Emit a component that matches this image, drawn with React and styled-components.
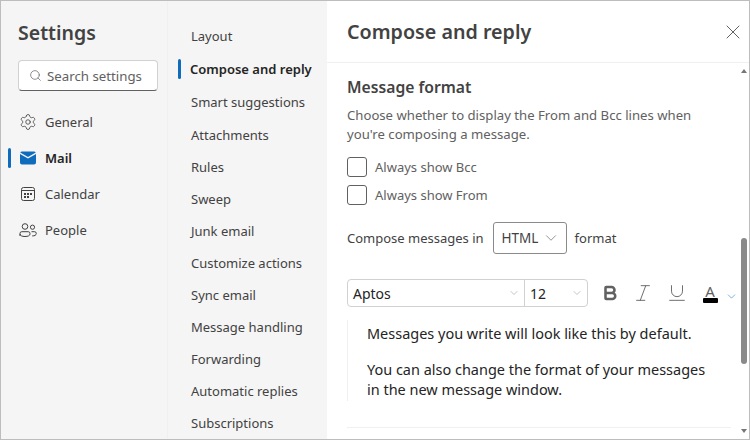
import React from "react";
import styled, { createGlobalStyle } from "styled-components";
import { Settings as GearIcon, Search, X, ChevronDown, Bold, Italic, Underline } from "lucide-react";

const GlobalStyle = createGlobalStyle`
  html, body { margin: 0; padding: 0; background: #fff; }
  * { box-sizing: border-box; }
  body { font-family: "Noto Sans", "Open Sans", sans-serif; color: #424242; }
`;

const MailIcon = () => (
  <svg width="16" height="14" viewBox="0 0 16 14">
    <path d="M0 3 L8 7.6 L16 3 V11.5 A2 2 0 0 1 14 13.5 H2 A2 2 0 0 1 0 11.5 Z" fill="#0f6cbd" />
    <path d="M0.2 1.6 A2 2 0 0 1 2 0.5 H14 A2 2 0 0 1 15.8 1.6 L8 6 Z" fill="#0f6cbd" />
  </svg>
);

const CalendarIcon = () => (
  <svg width="16" height="16" viewBox="0 0 16 16" fill="none" stroke="#424242">
    <rect x="1.5" y="1.5" width="13" height="13" rx="2" />
    <path d="M1.5 4.5 H14.5" />
    <g fill="#424242" stroke="none">
      <rect x="4" y="7" width="2" height="2" />
      <rect x="7" y="7" width="2" height="2" />
      <rect x="10" y="7" width="2" height="2" />
      <rect x="4" y="10" width="2" height="2" />
      <rect x="7" y="10" width="2" height="2" />
    </g>
  </svg>
);

const PeopleIcon = () => (
  <svg width="18" height="14" viewBox="0 0 18 14" fill="none" stroke="#424242">
    <circle cx="6" cy="3.5" r="2.8" />
    <path d="M1 13 V10.5 A1.8 1.8 0 0 1 2.8 8.7 H9.2 A1.8 1.8 0 0 1 11 10.5 V11 C11 12.6 9 13.5 6 13.5 C3 13.5 1 12.6 1 11" />
    <circle cx="13.5" cy="4.2" r="2.1" />
    <path d="M12.5 8.7 H15.5 A1.8 1.8 0 0 1 17.3 10.5 C17.3 12.2 15.6 13 13.2 12.9" />
  </svg>
);

const Window = styled.div`
  width: 750px;
  height: 440px;
  display: flex;
  overflow: hidden;
  border: 1px solid #bdbdbd;
`;

const Sidebar = styled.aside`
  width: 166px;
  flex: none;
  background: #f5f5f5;
  padding: 18px 9px 0 7px;
`;

const Title = styled.h1`
  margin: 0 0 0 10px;
  font-size: 19.5px;
  line-height: 28px;
  font-weight: 600;
  color: #424242;
`;

const SearchBox = styled.div`
  margin: 13px 0 13px 10px;
  height: 31px;
  display: flex;
  align-items: center;
  gap: 5px;
  padding-left: 10px;
  background: #fff;
  border: 1px solid #d1d1d1;
  border-bottom-color: #616161;
  border-radius: 4px;
  font-size: 13.25px;
  color: #616161;
`;

const NavRow = styled.div`
  height: 36px;
  display: flex;
  align-items: center;
  font-size: 13px;
  font-weight: ${(p) => (p.$active ? 600 : 400)};
  color: ${(p) => (p.$active ? "#242424" : "#424242")};
  &::before {
    content: "";
    width: 3px;
    height: 20px;
    flex: none;
    border-radius: 2px;
    background: ${(p) => (p.$active ? "#0f6cbd" : "transparent")};
  }
`;

const NavIcon = styled.span`
  width: 18px;
  margin: 0 8px;
  display: flex;
  justify-content: center;
  color: #424242;
`;

const Categories = styled.nav`
  width: 160px;
  flex: none;
  background: #f5f5f5;
  padding: 18px 0 0 10px;
  border-left: 1px solid #f0f0f0;
`;

const CategoryRow = styled.div`
  height: ${(p) => (p.$tall ? 33 : 32)}px;
  display: flex;
  align-items: center;
  white-space: nowrap;
  font-size: 13px;
  font-weight: ${(p) => (p.$active ? 600 : 400)};
  color: ${(p) => (p.$active ? "#242424" : "#424242")};
  padding-left: ${(p) => (p.$active ? 0 : 13)}px;
  &::before {
    content: "";
    display: ${(p) => (p.$active ? "block" : "none")};
    width: 3px;
    height: 20px;
    margin-right: 9px;
    border-radius: 2px;
    background: #0f6cbd;
  }
`;

const Pane = styled.main`
  flex: 1;
  min-width: 0;
  display: flex;
  flex-direction: column;
  background: #fff;
`;

const PaneHeader = styled.header`
  height: 62px;
  flex: none;
  display: flex;
  align-items: center;
  justify-content: space-between;
  padding: 0 4px 0 20px;
  border-bottom: 1px solid #f0f0f0;
`;

const PaneTitle = styled.h2`
  margin: 0;
  font-size: 19.7px;
  font-weight: 600;
  color: #424242;
`;

const CloseButton = styled.span`
  display: flex;
  color: #616161;
`;

const PaneBody = styled.div`
  flex: 1;
  min-height: 0;
  display: flex;
`;

const Content = styled.section`
  flex: 1;
  min-width: 0;
  padding: 13px 10px 0 20px;
`;

const SectionTitle = styled.h3`
  margin: 0 0 8px;
  font-size: 15.7px;
  line-height: 22px;
  font-weight: 600;
  color: #424242;
`;

const Description = styled.p`
  margin: 0 0 9px;
  font-size: 13.15px;
  line-height: 19px;
  color: #616161;
`;

const CheckRow = styled.label`
  height: 28px;
  display: flex;
  align-items: center;
  gap: 8px;
  font-size: 13px;
  color: #616161;
`;

const CheckBox = styled.span`
  width: 20px;
  height: 20px;
  border: 1px solid #616161;
  border-radius: 3px;
`;

const ComposeRow = styled.div`
  margin-top: 13px;
  display: flex;
  align-items: center;
  font-size: 13px;
  color: #424242;
`;

const FormatSelect = styled.span`
  width: 74px;
  height: 32px;
  margin: 0 8px 0 9px;
  padding: 0 6px 0 8px;
  display: flex;
  align-items: center;
  justify-content: space-between;
  border: 1px solid #8a8a8a;
  border-radius: 3px;
  font-size: 13.5px;
  svg { color: #616161; }
`;

const Toolbar = styled.div`
  margin-top: 25px;
  display: flex;
  align-items: center;
  & > * { flex: none; }
`;

const FontGroup = styled.div`
  width: 241px;
  height: 28px;
  display: flex;
  margin-right: 5px;
  border: 1px solid #d1d1d1;
  border-radius: 4px;
`;

const FontField = styled.span`
  width: ${(p) => p.$width}px;
  display: flex;
  align-items: center;
  justify-content: space-between;
  padding: 0 4px 0 5px;
  font-size: 14px;
  color: #242424;
  & + & { border-left: 1px solid #d1d1d1; }
  svg { color: #8a8a8a; }
`;

const FormatButton = styled.span`
  width: 33.5px;
  display: flex;
  justify-content: center;
  color: #616161;
`;

const ColorButton = styled.span`
  margin-left: 9px;
  display: flex;
  align-items: flex-end;
  gap: 7px;
  color: #0f6cbd;
`;

const ColorGlyph = styled.span`
  width: 15px;
  display: flex;
  flex-direction: column;
  align-items: center;
  font-size: 15px;
  line-height: 14px;
  color: #616161;
  &::after {
    content: "";
    width: 15px;
    height: 5px;
    border-radius: 1px;
    background: #000;
  }
`;

const Preview = styled.div`
  margin-top: 13px;
  padding: 4px 10px 0 19px;
  border-left: 1px solid #f0f0f0;
  height: 81px;
  font-size: 14.47px;
  line-height: 20px;
  color: #242424;
  p { margin: 0 0 16px; }
`;

const Divider = styled.hr`
  margin: 26px 0 0 0;
  border: 0;
  border-top: 1px solid #f0f0f0;
`;

const Scrollbar = styled.div`
  width: 8px;
  flex: none;
  display: flex;
  flex-direction: column;
  align-items: center;
  padding-right: 2px;
`;

const Arrow = styled.span`
  width: 0;
  height: 0;
  flex: none;
  border-left: 3px solid transparent;
  border-right: 3px solid transparent;
  ${(p) => (p.$down ? "border-top: 4px solid #767676;" : "border-bottom: 4px solid #767676;")}
  margin: ${(p) => (p.$down ? "auto 0 6px" : "6px 0 0")};
`;

const Thumb = styled.span`
  width: 6px;
  height: 126px;
  margin-top: 165px;
  border-radius: 3px;
  background: #8a8a8a;
`;

const CATEGORIES = [
  "Layout", "Compose and reply", "Smart suggestions", "Attachments", "Rules", "Sweep",
  "Junk email", "Customize actions", "Sync email", "Message handling", "Forwarding",
  "Automatic replies", "Subscriptions",
];

export default function App() {
  return (
    <Window>
      <GlobalStyle />
      <Sidebar>
        <Title>Settings</Title>
        <SearchBox>
          <Search size={13} strokeWidth={1.3} />
          Search settings
        </SearchBox>
        <NavRow>
          <NavIcon><GearIcon size={18} strokeWidth={1.1} /></NavIcon>General
        </NavRow>
        <NavRow $active>
          <NavIcon><MailIcon /></NavIcon>Mail
        </NavRow>
        <NavRow>
          <NavIcon><CalendarIcon /></NavIcon>Calendar
        </NavRow>
        <NavRow>
          <NavIcon><PeopleIcon /></NavIcon>People
        </NavRow>
      </Sidebar>
      <Categories>
        {CATEGORIES.map((name, i) => (
          <CategoryRow key={name} $active={i === 1} $tall={i < 4}>{name}</CategoryRow>
        ))}
      </Categories>
      <Pane>
        <PaneHeader>
          <PaneTitle>Compose and reply</PaneTitle>
          <CloseButton><X size={24} strokeWidth={1} /></CloseButton>
        </PaneHeader>
        <PaneBody>
          <Content>
            <SectionTitle>Message format</SectionTitle>
            <Description>
              Choose whether to display the From and Bcc lines when<br />
              you're composing a message.
            </Description>
            <CheckRow><CheckBox />Always show Bcc</CheckRow>
            <CheckRow><CheckBox />Always show From</CheckRow>
            <ComposeRow>
              Compose messages in
              <FormatSelect>HTML <ChevronDown size={18} strokeWidth={0.9} /></FormatSelect>
              format
            </ComposeRow>
            <Toolbar>
              <FontGroup>
                <FontField $width={176}>Aptos <ChevronDown size={12} strokeWidth={1} /></FontField>
                <FontField $width={63}>12 <ChevronDown size={12} strokeWidth={1} /></FontField>
              </FontGroup>
              <FormatButton><Bold size={18} strokeWidth={3.4} /></FormatButton>
              <FormatButton><Italic size={22} strokeWidth={1} /></FormatButton>
              <FormatButton><Underline size={22} strokeWidth={1} /></FormatButton>
              <ColorButton>
                <ColorGlyph>A</ColorGlyph>
                <ChevronDown size={13} strokeWidth={1} />
              </ColorButton>
            </Toolbar>
            <Preview>
              <p>Messages you write will look like this by default.</p>
              <p>You can also change the format of your messages<br />in the new message window.</p>
            </Preview>
            <Divider />
          </Content>
          <Scrollbar>
            <Arrow />
            <Thumb />
            <Arrow $down />
          </Scrollbar>
        </PaneBody>
      </Pane>
    </Window>
  );
}
